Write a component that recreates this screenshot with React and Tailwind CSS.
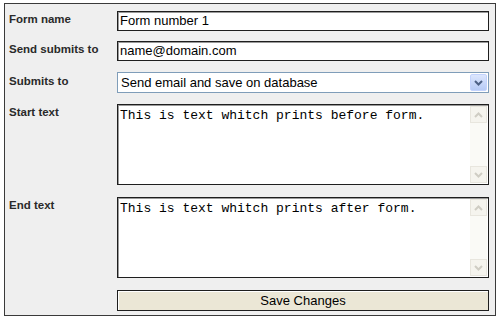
import React from 'react';

const label = "text-[11.5px] leading-[14px] font-bold text-[#2a2a2a] pt-[0px]";
const field = "h-[20px] w-full border border-[#1e1e1e] bg-white shadow-[inset_1px_1px_0_#9a9a9a] px-[2px] text-[13px] text-black flex items-center";

function Chevron({ up, color }) {
  return (
    <svg width="9" height="6" viewBox="0 0 9 6">
      <path
        d={up ? "M1 5 L4.5 1.5 L8 5" : "M1 1 L4.5 4.5 L8 1"}
        fill="none"
        stroke={color}
        strokeWidth="2"
      />
    </svg>
  );
}

function TextArea({ text }) {
  return (
    <div className="h-[81px] w-full border border-[#1e1e1e] bg-white shadow-[inset_1px_1px_0_#9a9a9a] flex">
      <div className="flex-1 pl-[2px] pt-[3px] text-[13px] leading-[15px] text-black [font-family:'Liberation_Mono',monospace]">
        {text}
      </div>
      <div className="w-[17px] my-[1px] mr-[1px] bg-[#fafaf6] flex flex-col justify-between">
        <div className="h-[17px] border border-[#e8e6de] bg-[#f5f4ee] flex items-center justify-center">
          <Chevron up color="#cfcdc4" />
        </div>
        <div className="h-[17px] border border-[#e8e6de] bg-[#f5f4ee] flex items-center justify-center">
          <Chevron color="#cfcdc4" />
        </div>
      </div>
    </div>
  );
}

export default function App() {
  return (
    <div className="w-[500px] h-[322px] bg-white pt-[3px] pl-[4px] [font-family:'Liberation_Sans',Arial,sans-serif]">
      <div className="w-[492px] h-[313px] border border-[#3a3a3a] bg-[#efefef] pt-[7px] pl-[4px] pr-[6px]">
        <div className="grid grid-cols-[108px_1fr] gap-y-[10px]">
          <div className={label + " pt-[1px]"}>Form name</div>
          <div className={field}>Form number 1</div>

          <div className={label + " pt-[1px]"}>Send submits to</div>
          <div className={field}>name@domain.com</div>

          <div className={label + " pt-[2px] mt-[1px]"}>Submits to</div>
          <div className="mt-[1px] h-[21px] w-full border border-[#7f9db9] bg-white flex items-center text-[13px] text-black">
            <span className="flex-1 pl-[3px]">Send email and save on database</span>
            <div className="w-[17px] h-[17px] mr-[1px] rounded-[2px] border border-[#c3d3fd] bg-gradient-to-b from-[#dce6fd] to-[#b7cbf6] flex items-center justify-center">
              <Chevron color="#4d6185" />
            </div>
          </div>

          <div className={label + " pt-[1px] mt-[1px]"}>Start text</div>
          <div className="mt-[1px]">
            <TextArea text="This is text whitch prints before form." />
          </div>

          <div className={label + " pt-[1px] mt-[2px]"}>End text</div>
          <div className="mt-[2px]">
            <TextArea text="This is text whitch prints after form." />
          </div>

          <div className="mt-[2px]"></div>
          <div className="mt-[2px] h-[21px] w-full border border-[#1e1e1e] bg-[#ebe7d6] shadow-[inset_1px_1px_0_#ffffff] flex items-center justify-center text-[13px] text-black">
            Save Changes
          </div>
        </div>
      </div>
    </div>
  );
}
